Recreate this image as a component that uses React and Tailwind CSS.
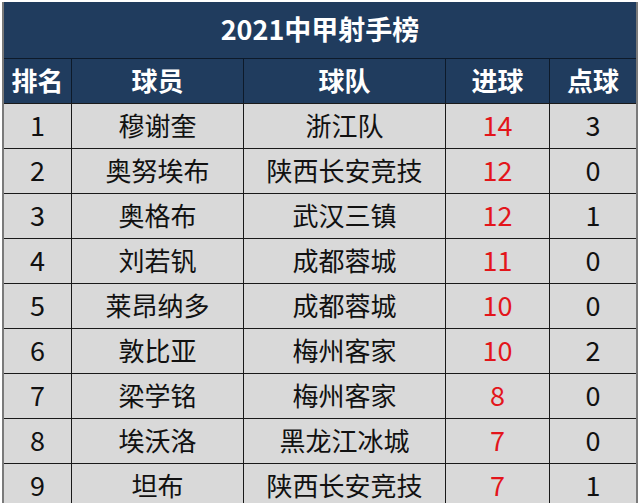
import React from "react";

const rows = [
  { rank: 1, name: "穆谢奎", team: "浙江队", goals: 14, pens: 3 },
  { rank: 2, name: "奥努埃布", team: "陕西长安竞技", goals: 12, pens: 0 },
  { rank: 3, name: "奥格布", team: "武汉三镇", goals: 12, pens: 1 },
  { rank: 4, name: "刘若钒", team: "成都蓉城", goals: 11, pens: 0 },
  { rank: 5, name: "莱昂纳多", team: "成都蓉城", goals: 10, pens: 0 },
  { rank: 6, name: "敦比亚", team: "梅州客家", goals: 10, pens: 2 },
  { rank: 7, name: "梁学铭", team: "梅州客家", goals: 8, pens: 0 },
  { rank: 8, name: "埃沃洛", team: "黑龙江冰城", goals: 7, pens: 0 },
  { rank: 9, name: "坦布", team: "陕西长安竞技", goals: 7, pens: 1 },
];

const heads = ["排名", "球员", "球队", "进球", "点球"];

export default function App() {
  return (
    <div
      className="w-[640px] h-[503px] overflow-hidden bg-white pt-[2px] pl-[2px]"
      style={{ fontFamily: '"Noto Sans CJK SC", "Noto Sans", sans-serif' }}
    >
      <div className="w-[636px] border-x-[2px] border-[#7a7a7a]">
        <div className="h-[57px] bg-[#203c5e] flex items-center justify-center pb-[4px] text-white font-bold text-[27px] leading-none border-b-[1.5px] border-[#0d1a2a]">
          2021中甲射手榜
        </div>
        <div className="grid grid-cols-[68px_172px_202px_104px_86px] h-[44px] bg-[#203c5e] text-white font-bold text-[26px] leading-none">
          {heads.map((h, i) => (
            <div
              key={h}
              className={`flex items-center justify-center pb-[3px] ${i < 4 ? "border-r-[1.5px] border-[#0d1a2a]" : ""}`}
            >
              {h}
            </div>
          ))}
        </div>
        {rows.map((r) => (
          <div
            key={r.rank}
            className="grid grid-cols-[68px_172px_202px_104px_86px] h-[45px] bg-[#d9d9d9] text-[#111] text-[26px] leading-none border-t-[1.5px] border-[#1a1a1a]"
          >
            <div className="flex items-center justify-center pb-[3px] text-[27px] border-r-[1.5px] border-[#1a1a1a]">{r.rank}</div>
            <div className="flex items-center justify-center pb-[3px] border-r-[1.5px] border-[#1a1a1a]">{r.name}</div>
            <div className="flex items-center justify-center pb-[3px] border-r-[1.5px] border-[#1a1a1a]">{r.team}</div>
            <div className="flex items-center justify-center pb-[3px] text-[27px] border-r-[1.5px] border-[#1a1a1a] text-[#e3151b]">{r.goals}</div>
            <div className="flex items-center justify-center pb-[3px] text-[27px]">{r.pens}</div>
          </div>
        ))}
      </div>
    </div>
  );
}
